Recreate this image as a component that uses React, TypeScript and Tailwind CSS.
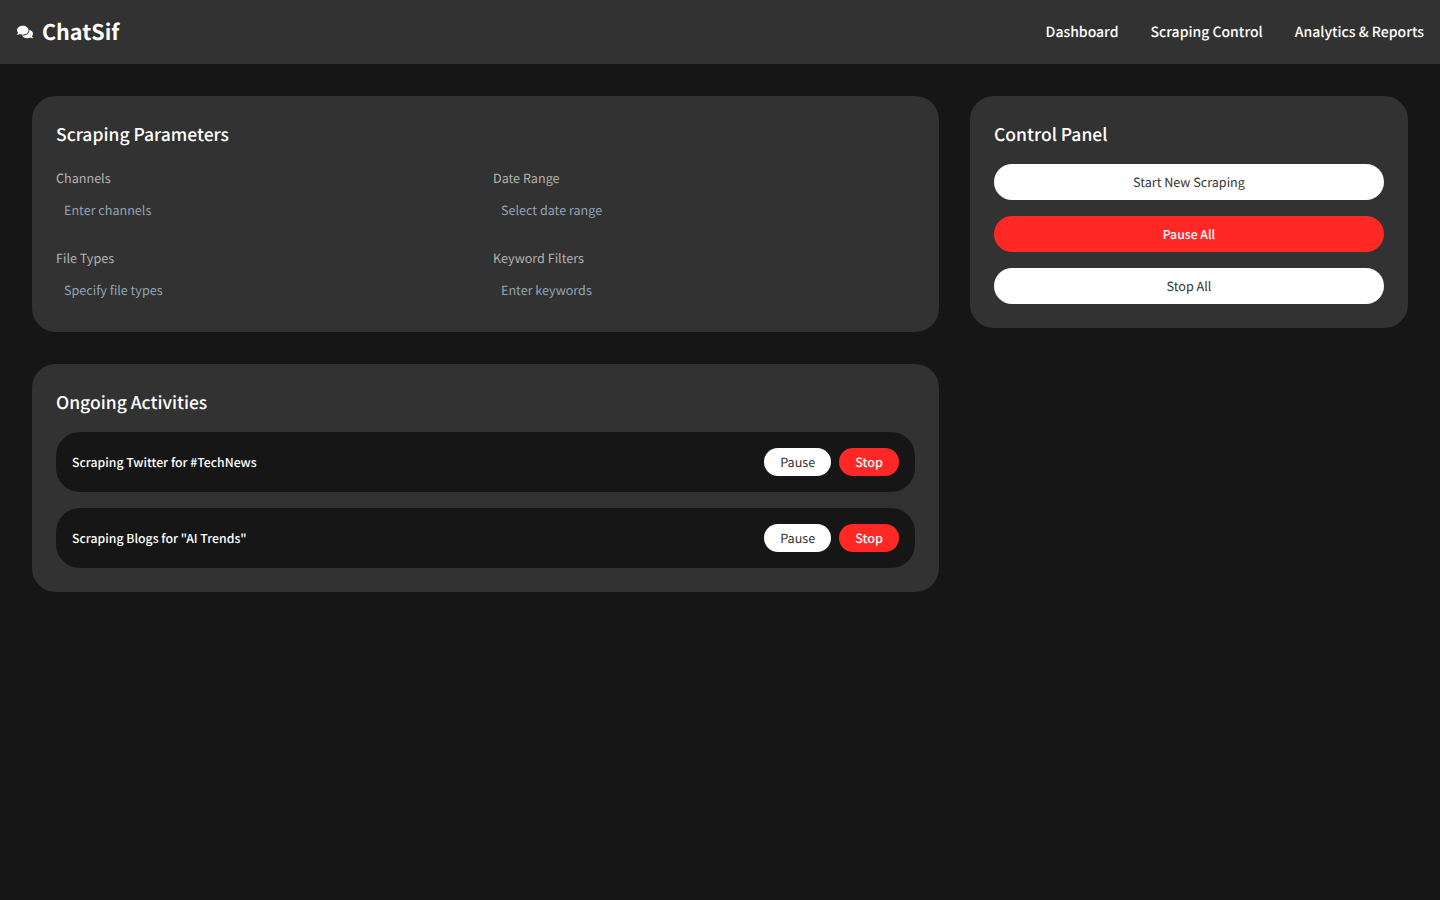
import { FaComments } from 'react-icons/fa';

const navLinks = ['Dashboard', 'Scraping Control', 'Analytics & Reports'];

const fields = [
  { label: 'Channels', placeholder: 'Enter channels' },
  { label: 'Date Range', placeholder: 'Select date range' },
  { label: 'File Types', placeholder: 'Specify file types' },
  { label: 'Keyword Filters', placeholder: 'Enter keywords' },
];

const activities = ['Scraping Twitter for #TechNews', 'Scraping Blogs for "AI Trends"'];

const App = () => {
  return (
    <div className="min-h-screen bg-[#161616] text-white [text-rendering:geometricPrecision] font-['Noto_Sans_CJK_JP','Noto_Sans',sans-serif]">
      <header className="h-16 bg-[#323232] flex items-center justify-between px-4">
        <div className="flex items-center gap-[9px]">
          <FaComments className="ml-px w-4 h-4 text-white" />
          <span className="text-[21.5px] font-bold">ChatSif</span>
        </div>
        <nav className="flex gap-8">
          {navLinks.map(link => (
            <a key={link} href="#" className="text-[14px] font-medium">
              {link}
            </a>
          ))}
        </nav>
      </header>

      <main className="grid grid-cols-[907px_438px] gap-x-[31px] p-8 items-start">
        <div className="flex flex-col gap-8">
          <section className="bg-[#323232] rounded-3xl p-6">
            <h2 className="text-[17.5px] leading-[30px] font-medium mb-[14px]">Scraping Parameters</h2>
            <div className="grid grid-cols-[421px_minmax(0,1fr)] gap-4">
              {fields.map(f => (
                <div key={f.label}>
                  <label className="block text-[12.6px] leading-7 text-[#b3b3b3]">{f.label}</label>
                  <input
                    type="text"
                    placeholder={f.placeholder}
                    className="block w-full h-9 px-2 pt-[7px] pb-[9px] text-[12.6px] [text-rendering:geometricPrecision] bg-transparent outline-none placeholder:text-[#94a3b8]"
                  />
                </div>
              ))}
            </div>
          </section>

          <section className="bg-[#323232] rounded-3xl p-6">
            <h2 className="text-[17.5px] leading-[30px] font-medium mb-[14px]">Ongoing Activities</h2>
            <div className="flex flex-col gap-4">
              {activities.map(a => (
                <div key={a} className="bg-[#161616] rounded-3xl p-4 flex items-center justify-between">
                  <span className="text-[12.25px] font-medium">{a}</span>
                  <div className="flex gap-2">
                    <button type="button" className="h-7 px-4 rounded-full bg-white text-[#333333] text-[12.6px] [text-rendering:geometricPrecision]">
                      Pause
                    </button>
                    <button type="button" className="h-7 px-4 rounded-full bg-[#ff2825] text-white text-[12.6px] font-medium [text-rendering:geometricPrecision]">
                      Stop
                    </button>
                  </div>
                </div>
              ))}
            </div>
          </section>
        </div>

        <section className="bg-[#323232] rounded-3xl p-6">
          <h2 className="text-[17.5px] leading-[30px] font-medium mb-[14px]">Control Panel</h2>
          <div className="flex flex-col gap-4">
            <button type="button" className="h-9 rounded-full bg-white text-[#333333] text-[12.6px] [text-rendering:geometricPrecision]">
              Start New Scraping
            </button>
            <button type="button" className="h-9 rounded-full bg-[#ff2825] text-white text-[12.25px] font-medium [text-rendering:geometricPrecision]">
              Pause All
            </button>
            <button type="button" className="h-9 rounded-full bg-white text-[#333333] text-[12.6px] [text-rendering:geometricPrecision]">
              Stop All
            </button>
          </div>
        </section>
      </main>
    </div>
  );
};

export default App;
